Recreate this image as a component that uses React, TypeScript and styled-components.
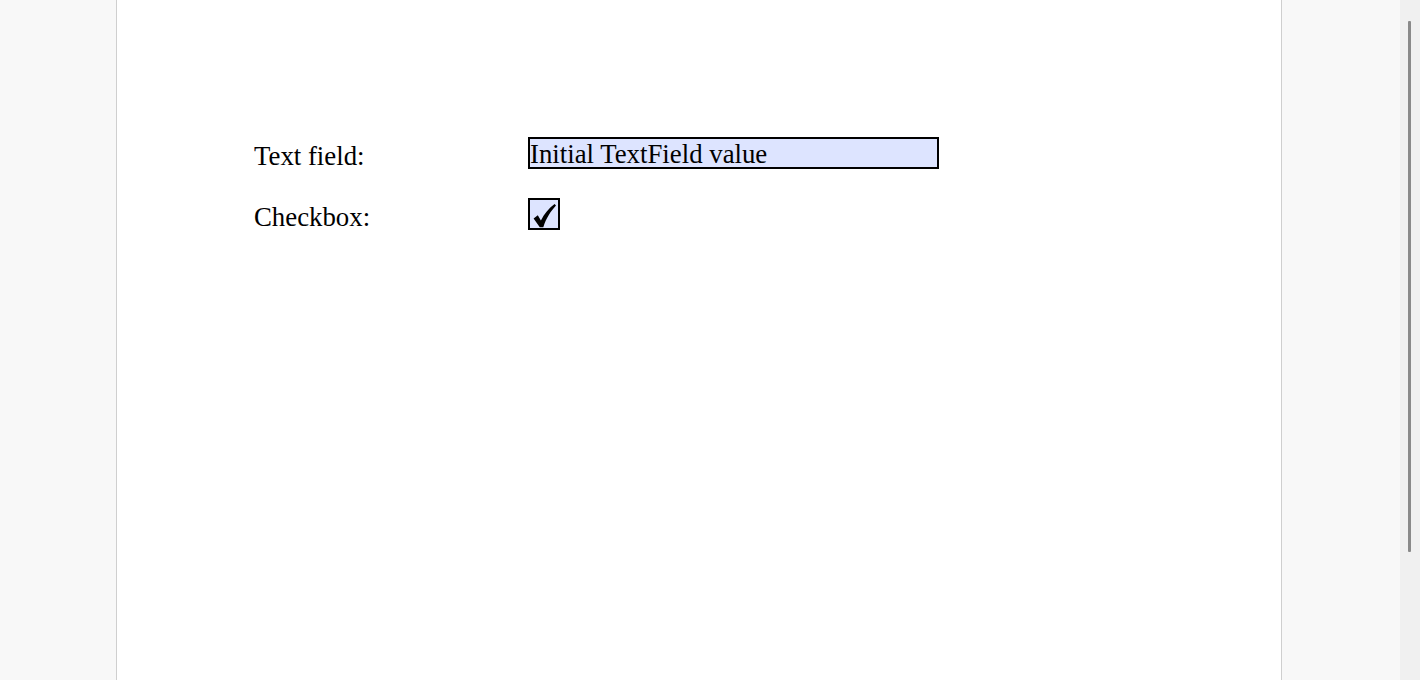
import { FC } from 'react';
import styled, { createGlobalStyle } from 'styled-components';

const GlobalStyle = createGlobalStyle`
  html, body {
    margin: 0;
    padding: 0;
    height: 100%;
    overflow: hidden;
  }

  #root {
    height: 100%;
  }
`;

const fields = [
  { label: 'Text field:', kind: 'text', value: 'Initial TextField value' },
  { label: 'Checkbox:', kind: 'check', value: '' },
];

const CheckMark: FC = () => (
  <svg width="28" height="28" viewBox="0 0 28 28">
    <path
      d="M3.6 18.4 L7.8 15.3 L10.9 20.4 C14.4 13.4 19 8.2 24.6 4 L26 5.6 C20.8 11.1 16.3 18 13.3 27.2 L9.8 27.2 Z"
      fill="#000"
    />
  </svg>
);

const App: FC = () => (
  <>
    <GlobalStyle />
    <Viewer>
      <Canvas>
        <Page>
          <Form>
            {fields.map((field) => (
              <Row key={field.label}>
                <Label>{field.label}</Label>
                {field.kind === 'text' ? (
                  <TextBox>{field.value}</TextBox>
                ) : (
                  <CheckBox>
                    <CheckMark />
                  </CheckBox>
                )}
              </Row>
            ))}
          </Form>
        </Page>
      </Canvas>
      <ScrollTrack>
        <ScrollThumb />
      </ScrollTrack>
    </Viewer>
  </>
);

export default App;

const Viewer = styled.div`
  display: flex;
  height: 100%;
  background: #f8f8f8;
`;

const Canvas = styled.div`
  flex: 1;
  min-width: 0;
  display: flex;
  padding-left: 116px;
`;

const Page = styled.div`
  flex-shrink: 0;
  width: 1166px;
  height: 100%;
  box-sizing: border-box;
  background: #ffffff;
  border-left: 1px solid #cfcfcf;
  border-right: 1px solid #cfcfcf;
  padding: 137px 0 0 137px;
`;

const Form = styled.div`
  display: flex;
  flex-direction: column;
  gap: 29px;
`;

const Row = styled.div`
  display: grid;
  grid-template-columns: 274px auto;
  align-items: start;
  font-family: 'Liberation Serif', 'Times New Roman', serif;
  font-size: 26.8px;
  color: #000;
`;

const Label = styled.div`
  height: 32px;
  line-height: 32px;
  padding-top: 3px;
  box-sizing: border-box;
  white-space: nowrap;
`;

const TextBox = styled.div`
  width: 411px;
  height: 32px;
  box-sizing: border-box;
  border: 2px solid #000;
  background: #dde4ff;
  padding: 2px 0 0 0;
  line-height: 27px;
  overflow: hidden;
  white-space: nowrap;
`;

const CheckBox = styled.div`
  width: 32px;
  height: 32px;
  box-sizing: border-box;
  border: 2px solid #000;
  background: #dde4ff;
  display: flex;

  svg {
    display: block;
  }
`;

const ScrollTrack = styled.div`
  flex-shrink: 0;
  width: 20px;
  background: #f0f0f0;
  padding: 21px 0 0 8px;
  box-sizing: border-box;
`;

const ScrollThumb = styled.div`
  width: 3px;
  height: 531px;
  background: #8a8a8a;
  border-radius: 1px;
`;
